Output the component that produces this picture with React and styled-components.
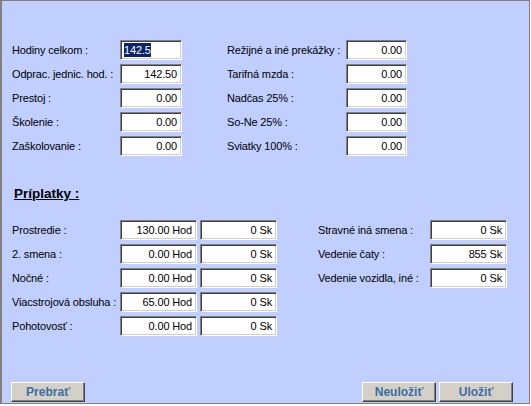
import React from "react";
import styled, { createGlobalStyle } from "styled-components";

const GlobalStyle = createGlobalStyle`
  html, body {
    margin: 0;
    padding: 0;
    background: #ffffff;
  }
  body {
    font-family: "Liberation Sans", Arial, sans-serif;
    font-size: 11px;
    letter-spacing: -0.15px;
    color: #000;
  }
`;

const Frame = styled.div`
  box-sizing: border-box;
  width: 530px;
  height: 404px;
  border: 1px solid #808080;
  border-left-width: 2px;
  background: #c0cfff;
  display: flex;
  flex-direction: column;
  padding: 39px 17px 1px 10px;
`;

const TopSection = styled.div`
  display: flex;
  gap: 45px;
`;

const FieldGrid = styled.div`
  display: grid;
  grid-template-columns: ${(p) => p.$cols};
  grid-auto-rows: 20px;
  row-gap: 4px;
  column-gap: 3px;
  align-items: center;
`;

const Label = styled.div`
  min-width: 0;
  white-space: nowrap;
  line-height: 20px;
`;

const Field = styled.div`
  box-sizing: border-box;
  height: 20px;
  background: #ffffff;
  border-top: 1px solid #808080;
  border-left: 1px solid #808080;
  border-bottom: 1px solid #ffffff;
  border-right: 1px solid #ffffff;
  box-shadow: inset 1px 1px 0 #404040, inset -1px -1px 0 #d4d0c8;
  padding: 0 4px 0 3px;
  line-height: 18px;
  text-align: ${(p) => (p.$left ? "left" : "right")};
  white-space: nowrap;
  overflow: hidden;
`;

const Selected = styled.span`
  background: #0a246a;
  color: #ffffff;
  padding: 1px 0;
`;

const Heading = styled.h2`
  margin: 30px 0 0 2px;
  font-size: 13.5px;
  line-height: 16px;
  font-weight: bold;
  letter-spacing: 0;
  text-decoration: underline;
`;

const BottomSection = styled.div`
  display: flex;
  margin-top: 18px;
  gap: 41px;
  align-items: flex-start;
`;

const Footer = styled.div`
  margin: auto -1px 0 -1px;
  display: flex;
  gap: 3px;
`;

const Spacer = styled.div`
  flex: 1;
`;

const Button = styled.button`
  box-sizing: border-box;
  width: 74px;
  height: 20px;
  background: #d4d0c8;
  border-top: 1px solid #ffffff;
  border-left: 1px solid #ffffff;
  border-right: 1px solid #404040;
  border-bottom: 1px solid #404040;
  box-shadow: inset -1px -1px 0 #808080;
  font-family: "Liberation Sans", Arial, sans-serif;
  font-size: 12px;
  font-weight: bold;
  color: #3a6ea5;
  padding: 0;
  cursor: pointer;
`;

const topLeft = [
  ["Hodiny celkom :", "142.5", true],
  ["Odprac. jednic. hod. :", "142.50"],
  ["Prestoj :", "0.00"],
  ["Školenie :", "0.00"],
  ["Zaškolovanie :", "0.00"],
];

const topRight = [
  ["Režijné a iné prekážky :", "0.00"],
  ["Tarifná mzda :", "0.00"],
  ["Nadčas 25% :", "0.00"],
  ["So-Ne 25% :", "0.00"],
  ["Sviatky 100% :", "0.00"],
];

const extras = [
  ["Prostredie :", "130.00 Hod", "0 Sk"],
  ["2. smena :", "0.00 Hod", "0 Sk"],
  ["Nočné :", "0.00 Hod", "0 Sk"],
  ["Viacstrojová obsluha :", "65.00 Hod", "0 Sk"],
  ["Pohotovosť :", "0.00 Hod", "0 Sk"],
];

const meals = [
  ["Stravné iná smena :", "0 Sk"],
  ["Vedenie čaty :", "855 Sk"],
  ["Vedenie vozidla, iné :", "0 Sk"],
];

export default function App() {
  return (
    <>
      <GlobalStyle />
      <Frame>
        <TopSection>
          <FieldGrid $cols="105px 62px">
            {topLeft.map(([label, value, sel]) => (
              <React.Fragment key={label}>
                <Label>{label}</Label>
                {sel ? (
                  <Field $left>
                    <Selected>{value}</Selected>
                  </Field>
                ) : (
                  <Field>{value}</Field>
                )}
              </React.Fragment>
            ))}
          </FieldGrid>
          <FieldGrid $cols="116px 61px">
            {topRight.map(([label, value]) => (
              <React.Fragment key={label}>
                <Label>{label}</Label>
                <Field>{value}</Field>
              </React.Fragment>
            ))}
          </FieldGrid>
        </TopSection>

        <Heading>Príplatky :</Heading>

        <BottomSection>
          <FieldGrid $cols="105px 77px 77px">
            {extras.map(([label, hours, amount]) => (
              <React.Fragment key={label}>
                <Label>{label}</Label>
                <Field>{hours}</Field>
                <Field>{amount}</Field>
              </React.Fragment>
            ))}
          </FieldGrid>
          <FieldGrid $cols="109px 77px">
            {meals.map(([label, amount]) => (
              <React.Fragment key={label}>
                <Label>{label}</Label>
                <Field>{amount}</Field>
              </React.Fragment>
            ))}
          </FieldGrid>
        </BottomSection>

        <Footer>
          <Button>Prebrať</Button>
          <Spacer />
          <Button>Neuložiť</Button>
          <Button>Uložiť</Button>
        </Footer>
      </Frame>
    </>
  );
}
